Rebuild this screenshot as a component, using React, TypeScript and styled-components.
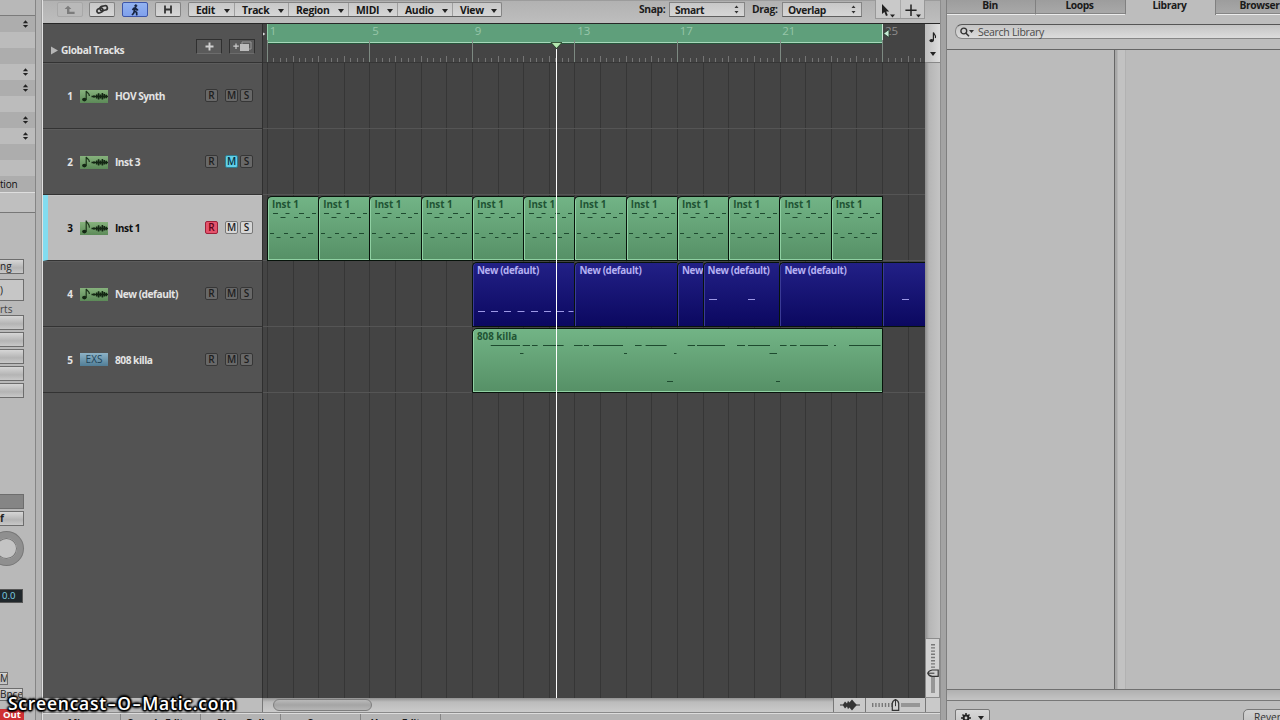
import React from "react";
import styled, { createGlobalStyle, css } from "styled-components";

const GlobalStyle = createGlobalStyle`
  * { box-sizing: border-box; }
  body { margin: 0; background: #bababa; font-family: "Open Sans", "Noto Sans", sans-serif; font-size: 10.5px; color: #1c1c1c; }
  svg { display: block; flex: none; }
`;

const BAR = 25.63;
const START = 3.9;

const Screen = styled.div`
  position: relative;
  display: flex;
  width: 1280px;
  height: 720px;
  overflow: hidden;
  background: #bababa;
  white-space: nowrap;
`;

/* ---------- Inspector ---------- */
const Inspector = styled.aside`
  width: 43px;
  height: 720px;
  flex: none;
  display: flex;
  border-right: 1px solid #e2e2e2;
  background: linear-gradient(90deg, #b4b4b4 0 35px, #858585 35px 36px, #b2b2b2 36px 41px, #9a9a9a 41px);
`;
const InspectorBody = styled.div`
  width: 35px;
  height: 720px;
  overflow: hidden;
  display: flex;
  flex-direction: column;
  align-items: flex-start;
  background: #b9b9b9;
`;
const InspectorTop = styled.div`
  height: 16px;
  width: 35px;
  flex: none;
  background: #b8b8b8;
  border-bottom: 1px solid #7b7b7b;
`;
const ParamRow = styled.div<{ $dark?: boolean }>`
  width: 35px;
  height: 16px;
  flex: none;
  display: flex;
  align-items: center;
  justify-content: flex-end;
  padding-right: 6px;
  background: ${(p) => (p.$dark ? "#adadad" : "#bcbcbc")};
`;
const ParamText = styled.span`
  width: 29px;
  font-size: 10px;
  letter-spacing: -0.2px;
  color: #111;
`;
const InspectorGap = styled.div`
  width: 35px;
  height: 21px;
  flex: none;
  background: #bfbfbf;
  border-top: 1px solid #dedede;
  border-bottom: 1px solid #777;
`;
const SlotButton = styled.div<{ $top: number; $w?: number; $h?: number; $tone?: "field" | "dark" }>`
  width: ${(p) => p.$w ?? 24}px;
  height: ${(p) => p.$h ?? 15}px;
  margin-top: ${(p) => p.$top}px;
  flex: none;
  display: flex;
  align-items: center;
  overflow: hidden;
  font-size: 10px;
  line-height: 13px;
  color: #222;
  border: 1px solid #6d6d6d;
  border-left: 0;
  background: ${(p) =>
    p.$tone === "field" ? "#c6c6c6" : p.$tone === "dark" ? "#858585" : "linear-gradient(#d6d6d6, #b4b4b4 60%, #c8c8c8)"};
`;
const SendsLabel = styled.div`
  height: 14px;
  margin-top: 1px;
  font-size: 10px;
  line-height: 14px;
  color: #444;
  flex: none;
`;
const Knob = styled.div`
  width: 33px;
  height: 33px;
  margin: 6px 0 0 -10px;
  flex: none;
  border-radius: 50%;
  border: 6px solid #8f8f8f;
  background: #c4c4c4;
  box-shadow: inset 0 0 0 1px #777, 0 0 0 1px #777;
`;
const Readout = styled.div`
  width: 23px;
  height: 14px;
  margin-top: 24px;
  flex: none;
  border: 1px solid #555;
  border-left: 0;
  background: #20272b;
  color: #7fd3e6;
  font-size: 9.5px;
  line-height: 12px;
  padding-left: 2px;
`;
const OutBadge = styled.div`
  width: 24px;
  height: 12px;
  margin-top: 8px;
  flex: none;
  background: #cf3034;
  color: #fff;
  font-size: 9.5px;
  font-weight: 700;
  line-height: 12px;
  padding-left: 3px;
`;

/* ---------- Arrange window ---------- */
const Arrange = styled.main`
  width: 897px;
  flex: none;
  display: flex;
  flex-direction: column;
  height: 720px;
`;
const Toolbar = styled.header`
  height: 24px;
  flex: none;
  display: flex;
  align-items: flex-start;
  padding: 2px 0 0 14px;
  background: linear-gradient(#9c9c9c 0 1px, #b2b2b2 1px, #bdbdbd 22px);
  border-bottom: 1px solid #272727;
`;
const raised = css`
  height: 15px;
  border: 1px solid #858585;
  border-bottom-color: #5f5f5f;
  background: linear-gradient(#c8c8c8, #d6d6d6);
`;
const ToolButton = styled.div<{ $active?: boolean; $dim?: boolean; $ml?: number }>`
  ${raised}
  width: 26px;
  margin-left: ${(p) => p.$ml ?? 0}px;
  flex: none;
  display: flex;
  align-items: center;
  justify-content: center;
  font-weight: 700;
  border-radius: 2px;
  ${(p) => p.$active && "background: linear-gradient(#93b3f0, #7fa0ec); border-color: #3d56a8;"}
  ${(p) => p.$dim && "background: #b9b9b9; border-color: #a8a8a8;"}
`;
const MenuBar = styled.nav`
  ${raised}
  display: flex;
  width: 314px;
  margin-left: 7px;
  flex: none;
  border-radius: 2px;
`;
const MenuItem = styled.div<{ $w: number }>`
  width: ${(p) => p.$w}px;
  display: flex;
  align-items: center;
  justify-content: space-between;
  padding: 0 4px 0 7px;
  font-weight: 700;
  font-size: 10.4px;
  line-height: 14px;
  color: #161616;
  letter-spacing: -0.3px;
  & + & { border-left: 1px solid #9f9f9f; }
`;
const Caret = styled.i<{ $s?: number }>`
  width: 0;
  height: 0;
  border: ${(p) => p.$s ?? 3}px solid transparent;
  border-top: ${(p) => (p.$s ?? 3) + 1}px solid #222;
  border-bottom: 0;
  margin-top: 3px;
`;
const FieldLabel = styled.span<{ $w: number; $ml: number }>`
  width: ${(p) => p.$w}px;
  margin-left: ${(p) => p.$ml}px;
  flex: none;
  font-weight: 700;
  font-size: 10.3px;
  letter-spacing: -0.35px;
  line-height: 15px;
`;
const Select = styled.div<{ $w: number }>`
  ${raised}
  width: ${(p) => p.$w}px;
  flex: none;
  display: flex;
  align-items: center;
  justify-content: space-between;
  padding: 0 5px;
  font-weight: 700;
  font-size: 10.3px;
  letter-spacing: -0.4px;
`;
const ToolPair = styled.div`
  display: flex;
  height: 19px;
  width: 50px;
  margin: -2px 0 0 13px;
  flex: none;
  background: #c9c9c9;
  border: 1px solid #989898;
  border-top: 0;
`;
const ToolCell = styled.div`
  flex: 1;
  display: flex;
  align-items: center;
  justify-content: center;
  & + & { border-left: 1px solid #aaa; }
`;
const Body = styled.section`
  display: flex;
  height: 674px;
  flex: none;
`;

/* track headers */
const Headers = styled.div`
  width: 219px;
  flex: none;
  background: #535353;
`;
const GlobalRow = styled.div`
  height: 39px;
  display: flex;
  align-items: center;
  padding: 8px 7px 0 8px;
  border-bottom: 1px solid #333;
`;
const GlobalTitle = styled.span`
  flex: 1;
  padding: 6px 0 0 3px;
  font-weight: 700;
  font-size: 10.2px;
  letter-spacing: -0.4px;
  color: #e4e4e4;
`;
const HeaderButton = styled.div`
  width: 26px;
  height: 15px;
  margin: 0 0 1px 7px;
  border: 1px solid #303030;
  border-bottom-color: #6c6c6c;
  background: #5a5a5a;
  display: flex;
  align-items: center;
  justify-content: center;
`;
const TrackRow = styled.div<{ $selected?: boolean }>`
  height: 66px;
  display: flex;
  align-items: center;
  padding: 0 9px 0 ${(p) => (p.$selected ? 19 : 24)}px;
  border-bottom: 1px solid #333;
  box-shadow: inset 0 1px 0 ${(p) => (p.$selected ? "#c4c4c4" : "#5c5c5c")};
  color: ${(p) => (p.$selected ? "#0e0e0e" : "#e4e4e4")};
  background: ${(p) => (p.$selected ? "#bcbcbc" : "transparent")};
  ${(p) => p.$selected && "border-left: 5px solid #82dcf0;"}
`;
const TrackNumber = styled.span`
  width: 13px;
  flex: none;
  font-weight: 700;
  font-size: 10px;
  text-align: right;
  padding-right: 7px;
`;
const TrackName = styled.span`
  flex: 1;
  padding: 1px 0 0 7px;
  font-weight: 700;
  font-size: 10.2px;
  letter-spacing: -0.5px;
`;
const Toggle = styled.span<{ $tone?: "light" | "red" | "cyan"; $ml?: number }>`
  width: 13px;
  height: 13px;
  margin-left: ${(p) => p.$ml ?? 2}px;
  flex: none;
  border: 1px solid #363636;
  border-radius: 2px;
  font-size: 10px;
  font-weight: 600;
  line-height: 11px;
  text-align: center;
  color: #1d1d1d;
  background: #686868;
  ${(p) => p.$tone === "light" && "background: #d6d6d6; border-color: #777;"}
  ${(p) => p.$tone === "red" && "background: #e4536c; border-color: #9c1f38; color: #5e0016;"}
  ${(p) => p.$tone === "cyan" && "background: #62cfe8; border-color: #2d7d90; color: #07303b;"}
`;
const Splitter = styled.div`
  width: 1px;
  flex: none;
  background: #2f2f2f;
`;

/* timeline */
const Timeline = styled.div`
  position: relative;
  width: 662px;
  flex: none;
  overflow: hidden;
  background: #444;
`;
const GridLayer = styled.div`
  position: absolute;
  inset: 39px 0 0 0;
`;
const Ruler = styled.div`
  position: relative;
  height: 39px;
  border-bottom: 1px solid #363636;
`;
const RulerMarks = styled.div`
  position: absolute;
  inset: 0;
`;
const Cycle = styled.div`
  height: 19px;
  width: 616px;
  margin-left: 4px;
  background: #5f9f7b;
  border-left: 1px solid #93cfab;
  border-right: 1px solid #c9e6d4;
  border-bottom: 1px solid #a6d8ba;
  box-shadow: 0 1px 0 #27553b;
`;
const RulerNumber = styled.span<{ $x: number; $muted?: boolean }>`
  position: absolute;
  top: 0;
  left: ${(p) => p.$x}px;
  font-size: 11.5px;
  line-height: 14px;
  color: ${(p) => (p.$muted ? "#8d8d8d" : "#97c6a9")};
`;
const Lane = styled.div<{ $offset?: number }>`
  position: relative;
  height: 66px;
  display: flex;
  padding: 1px 0 0 ${(p) => p.$offset ?? 0}px;
  background: linear-gradient(#555, #555) 0 65px / 100% 1px no-repeat;
`;
const RegionBox = styled.div<{ $w: number; $blue?: boolean; $last?: boolean; $joined?: boolean }>`
  width: ${(p) => p.$w}px;
  height: 65px;
  flex: none;
  overflow: hidden;
  position: relative;
  border: solid #07130b;
  border-width: 1px ${(p) => (p.$last ? 1 : 0)}px 1px 1px;
  border-top-left-radius: ${(p) => (p.$joined ? 0 : 5)}px;
  background: ${(p) =>
    p.$blue ? "linear-gradient(#222086, #0b0860)" : "linear-gradient(#72b486, #569066)"};
  box-shadow: inset 1px ${(p) => (p.$blue ? "0 0 #3a3a96" : "-1px 0 #8fd0a2")};
`;
const RegionLabel = styled.div<{ $blue?: boolean }>`
  padding: 1px 0 0 4px;
  font-weight: 700;
  font-size: 9.8px;
  letter-spacing: ${(p) => (p.$blue ? -0.37 : 0)}px;
  line-height: 14px;
  height: 0;
  color: ${(p) => (p.$blue ? "#b5b0f2" : "#1f5434")};
`;
const NoteLayer = styled.svg`
  margin-top: -2px;
`;
const Playhead = styled.div`
  position: absolute;
  left: 287px;
  top: 18px;
  bottom: 0;
  width: 12px;
  display: flex;
  flex-direction: column;
  align-items: center;
`;
const PlayLine = styled.div`
  width: 1px;
  flex: 1;
  margin-left: 1px;
  background: #fff;
`;

/* strip right of the timeline */
const Strip = styled.div`
  width: 15px;
  flex: none;
  display: flex;
  flex-direction: column;
  background: linear-gradient(90deg, #8b8b8b, #b6b6b6 4px, #c4c4c4);
`;
const NoteBox = styled.div`
  height: 39px;
  display: flex;
  flex-direction: column;
  align-items: center;
  padding-top: 7px;
  gap: 9px;
  background: linear-gradient(90deg, #bdbdbd, #dedede);
  border-bottom: 1px solid #888;
`;
const StripSpace = styled.div`
  flex: 1;
`;
const VZoom = styled.div`
  height: 60px;
  padding-left: 1px;
  background: #d2d2d2;
  border: 1px solid #8c8c8c;
`;

/* bottom area */
const ScrollRow = styled.div`
  height: 15px;
  flex: none;
  display: flex;
  border-bottom: 1px solid #8a8a8a;
  background: #bdbdbd;
`;
const ScrollLeft = styled.div`
  width: 220px;
  flex: none;
  border-right: 1px solid #777;
`;
const ScrollTrack = styled.div`
  width: 570px;
  flex: none;
  padding: 1px 0 0 10px;
  background: linear-gradient(#929292, #bcbcbc 4px, #cbcbcb);
`;
const Thumb = styled.div`
  width: 99px;
  height: 12px;
  border: 1px solid #7e7e7e;
  border-radius: 6px;
  background: linear-gradient(#b9b9b9, #a4a4a4 50%, #b6b6b6);
`;
const ScrollCell = styled.div<{ $w: number }>`
  width: ${(p) => p.$w}px;
  flex: none;
  display: flex;
  align-items: center;
  justify-content: center;
  background: #c9c9c9;
  border-left: 1px solid #777;
`;
const EditorTabs = styled.div`
  height: 7px;
  flex: none;
  overflow: hidden;
  display: flex;
  background: #b4b4b4;
  border-top: 1px solid #dcdcdc;
`;
const EditorTab = styled.div<{ $w: number }>`
  width: ${(p) => p.$w}px;
  flex: none;
  text-align: center;
  font-weight: 700;
  font-size: 10.3px;
  letter-spacing: -0.4px;
  line-height: 14px;
  padding-top: 2px;
  height: 20px;
  border-right: 1px solid #858585;
  color: #161616;
`;

/* ---------- Media panel ---------- */
const Gutter = styled.div`
  width: 7px;
  flex: none;
  background: linear-gradient(90deg, #8d8d8d 0 1px, #a3a3a3 1px 6px, #7f7f7f 6px);
`;
const Media = styled.aside`
  width: 333px;
  flex: none;
  height: 720px;
  display: flex;
  flex-direction: column;
  background: #bdbdbd;
`;
const MediaTabs = styled.div`
  height: 15px;
  flex: none;
  display: flex;
  overflow: hidden;
`;
const MediaTab = styled.div<{ $w: number; $active?: boolean }>`
  width: ${(p) => p.$w}px;
  flex: none;
  height: 15px;
  padding-right: 2px;
  text-align: center;
  font-weight: 700;
  font-size: 10.3px;
  letter-spacing: -0.4px;
  line-height: 10px;
  color: #1a1a1a;
  background: ${(p) => (p.$active ? "#bdbdbd" : "linear-gradient(#9d9d9d, #a9a9a9)")};
  border-right: 1px solid #808080;
  border-bottom: ${(p) => (p.$active ? "0" : "1px solid #ececec")};
  box-shadow: ${(p) => (p.$active ? "none" : "inset 0 -1px 0 #858585")};
`;
const SearchBox = styled.div`
  height: 15px;
  width: 345px;
  margin: 9px 0 0 8px;
  flex: none;
  display: flex;
  align-items: center;
  gap: 4px;
  padding-left: 4px;
  border: 1px solid #868686;
  border-top-color: #555;
  border-radius: 7px;
  background: linear-gradient(#c4c4c4, #dcdcdc);
  color: #4a4a4a;
  font-size: 10.5px;
  letter-spacing: -0.3px;
`;
const Columns = styled.div`
  height: 641px;
  margin-top: 10px;
  flex: none;
  display: flex;
  border-top: 1px solid #666;
  border-bottom: 1px solid #707070;
`;
const Column = styled.div<{ $w: number }>`
  width: ${(p) => p.$w}px;
  flex: none;
  background: #bbb;
`;
const ColumnBar = styled.div`
  width: 12px;
  flex: none;
  background: linear-gradient(90deg, #666 0 1px, #a8a8a8 1px 3px, #c2c2c2 4px 11px, #b2b2b2 11px);
`;
const FooterStrip = styled.div`
  height: 11px;
  flex: none;
  background: linear-gradient(#b0b0b0, #c4c4c4);
  border-bottom: 1px solid #777;
`;
const Footer = styled.div`
  flex: 1;
  display: flex;
  justify-content: space-between;
  padding: 8px 0 0 8px;
  overflow: hidden;
`;
const GearButton = styled.div`
  width: 35px;
  height: 17px;
  display: flex;
  align-items: center;
  justify-content: center;
  gap: 7px;
  border: 1px solid #777;
  border-radius: 2px;
  background: linear-gradient(#d8d8d8, #c4c4c4);
`;
const RevertButton = styled.div`
  width: 60px;
  height: 17px;
  margin-right: -23px;
  padding-left: 10px;
  border: 1px solid #777;
  border-radius: 5px;
  background: linear-gradient(#d2d2d2, #c0c0c0);
  font-size: 10.2px;
  color: #333;
  line-height: 14px;
`;

const Watermark = styled.div`
  position: absolute;
  left: 8px;
  top: 691px;
  font-size: 17.5px;
  line-height: 24px;
  font-weight: 600;
  letter-spacing: 0.75px;
  color: #fff;
  text-shadow: -1px -1px 1px #000, 1px -1px 1px #000, -1px 1px 1px #000, 1px 1px 1px #000, 0 2px 2px #000, 2px 0 2px #000, -2px 0 2px #000, 0 -2px 2px #000;
`;
const Dash = styled.span`
  display: inline-block;
  margin: 0 2px;
  transform: scaleX(1.5);
`;

/* ---------- Glyphs ---------- */
const UpDown = () => (
  <svg width="7" height="10" viewBox="0 0 8 10" fill="#222">
    <path d="M1 4L4 0.6L7 4ZM1 6L4 9.4L7 6Z" />
  </svg>
);
const SmallUpDown = () => (
  <svg width="5" height="9" viewBox="0 0 5 9" fill="#333">
    <path d="M0.5 3L2.5 0.4L4.5 3ZM0.5 6L2.5 8.6L4.5 6Z" />
  </svg>
);
const InstrumentIcon = ({ tall }: { tall?: boolean }) => (
  <svg width="28" height="20" viewBox="0 0 28 20">
    <defs>
      <linearGradient id="inst" x1="0" y1="0" x2="0" y2="1">
        <stop offset="0" stopColor="#86b27c" />
        <stop offset="1" stopColor="#5c8a58" />
      </linearGradient>
    </defs>
    <rect y="4" width="28" height="13" fill="url(#inst)" />
    <ellipse cx="4.4" cy="13.6" rx="2.3" ry="1.8" fill="#132613" />
    <path d={tall ? "M6.2 13.6V2.6C7 5.6 9.8 6 9.4 9.6" : "M6.2 13.6V5C7 7 9.4 7 9.4 10"} fill="none" stroke="#1c331a" strokeWidth="1.2" />
    <path d="M11.5 10.5H28M14 9.2v2.6" stroke="#132613" strokeWidth="1.3" fill="none" />
    <path d="M16.7 8.4v4.2M18.6 7.2v6.4M20.5 8.6v4M22.4 7v6.6M24.3 8v4.6M26.2 8.8v3.4" stroke="#132613" strokeWidth="1.6" fill="none" />
  </svg>
);
const ExsBox = styled.span`
  width: 28px;
  height: 13px;
  flex: none;
  background: linear-gradient(#8db2c6, #517e97);
  color: #1d4256;
  font-size: 10px;
  line-height: 13px;
  text-align: center;
`;
const Runner = () => (
  <svg width="12" height="12" viewBox="0 0 12 12" fill="none" stroke="#16233f" strokeWidth="1.7">
    <circle cx="6.8" cy="1.8" r="1.1" fill="#16233f" strokeWidth="0.8" />
    <path d="M6.2 3.6L5.4 7L7.6 8.4L7.8 11.4M5.4 7L4.6 9.2L3 11M3.6 6.2L4.6 4.4L6.4 3.8L7.8 5.8L9.2 5.6" />
  </svg>
);
const LinkGlyph = () => (
  <svg width="14" height="11" viewBox="0 0 14 11" fill="none" stroke="#333" strokeWidth="1.7">
    <rect x="1.8" y="4.4" width="6.2" height="4.2" rx="2.1" transform="rotate(-25 4.9 6.5)" />
    <rect x="5" y="2" width="7.4" height="4.4" rx="2.2" transform="rotate(-12 8.7 4.2)" />
  </svg>
);
const WaveGlyph = () => (
  <svg width="20" height="12" viewBox="0 0 20 12" fill="#333">
    <path d="M0 5.5H3L5 2.6L7 4.6L8 1.8L9.4 3.6L12 0.4L15 4L16.6 5.5H20V6.5H16.6L15 8L12 11.6L9.4 8.4L8 10.2L7 7.4L5 9.4L3 6.5H0Z" />
  </svg>
);
const HZoomGlyph = () => (
  <svg width="52" height="14" viewBox="0 0 52 14">
    <path d="M2 7h21" stroke="#777" strokeWidth="4" strokeDasharray="1.4 1.8" />
    <path d="M31 7h19" stroke="#969696" strokeWidth="4" />
    <path d="M22.3 12.4V5.4Q22.6 2.6 25.5 1.6Q28.4 2.6 28.7 5.4V12.4Z" fill="#cfcfcf" stroke="#333" strokeWidth="1.2" />
    <path d="M25.5 1.6v6.6" stroke="#333" />
  </svg>
);
const VZoomGlyph = () => (
  <svg width="12" height="58" viewBox="0 0 12 58">
    <path d="M6 5v25" stroke="#777" strokeWidth="4" strokeDasharray="1.4 1.8" />
    <path d="M6 38v16" stroke="#969696" strokeWidth="4" />
    <path d="M11.2 31H5.2Q1.6 31.6 0.8 34.2Q1.6 36.8 5.2 37.4H11.2Z" fill="#cfcfcf" stroke="#333" strokeWidth="1.2" />
    <path d="M0.8 34.2h6.6" stroke="#333" />
  </svg>
);

/* ---------- Data ---------- */
type Note = [number, number, number];
const INST_NOTES: Note[] = [
  [5, 17, 5], [17.5, 17, 4], [31, 17, 5], [44, 17, 4],
  [12.5, 21, 5], [26, 21, 4], [38, 21, 4],
  [2, 37, 4], [16, 37, 4], [28.5, 37, 4], [40, 37, 5],
  [8.5, 41, 4], [22, 41, 3.5], [34, 41, 4],
];
const KILLA_TOP: [number, number][] = [
  [490.7, 520], [522.7, 530], [532, 537.6], [543, 563.6], [574, 582.6], [584, 589], [593, 623],
  [635, 641.6], [645.6, 666.6], [687.6, 695], [697, 725], [737, 745], [748, 770], [780, 786.6],
  [790, 796.6], [800, 828], [834, 836], [849, 880.5],
];
const KILLA_NOTES: Note[] = [
  ...KILLA_TOP.map(([a, b]): Note => [a - 473, 17, b - a]),
  [47, 25, 3.5], [151, 25, 3], [201, 25, 2.5], [296.5, 25, 7.5], [194, 53, 6], [303, 53, 4],
];
const BASS_NOTES: Note[] = [5, 18, 31, 44.5, 58, 71, 84].map((x): Note => [x, 49, 7]).concat([[95.5, 49, 5]]);

const menus: [string, number][] = [
  ["Edit", 45], ["Track", 54], ["Region", 60], ["MIDI", 49], ["Audio", 55], ["View", 49],
];

const tracks = [
  { name: "HOV Synth" },
  { name: "Inst 3", muted: true },
  { name: "Inst 1", selected: true },
  { name: "New (default)" },
  { name: "808 killa", exs: true },
];

interface RegionProps {
  label?: string;
  bars: number;
  blue?: boolean;
  last?: boolean;
  joined?: boolean;
  notes?: Note[];
}
const Region = ({ label, bars, blue, last, joined, notes = [] }: RegionProps) => (
  <RegionBox $w={bars * BAR + (last ? 1 : 0)} $blue={blue} $last={last} $joined={joined}>
    <RegionLabel $blue={blue}>{label}</RegionLabel>
    <NoteLayer width={bars * BAR} height="65">
      {notes.map(([x, y, w], i) => (
        <rect key={i} x={x} y={y} width={w} height="1" fill={blue ? "#9d98e6" : "#1e4a2f"} />
      ))}
    </NoteLayer>
  </RegionBox>
);

const GridLines = () => (
  <svg width="663" height="635">
    {Array.from({ length: 26 }, (_, i) => (
      <rect key={i} x={Math.round(START + i * BAR)} y="0" width="1" height="635" fill="#363636" />
    ))}
  </svg>
);

const RulerTicks = () => (
  <svg width="663" height="38">
    {Array.from({ length: 104 }, (_, i) => {
      const bar = i % 4 === 0;
      const major = i % 16 === 0;
      const top = major ? 16 : bar ? 32 : 34;
      return (
        <rect key={i} x={Math.round(START + (i * BAR) / 4)} y={top} width="1" height={38 - top} fill={major ? "#7d8a82" : "#747474"} />
      );
    })}
  </svg>
);

export default function App() {
  return (
    <>
      <GlobalStyle />
      <Screen>
        <Inspector>
          <InspectorBody>
            <InspectorTop />
            {["s", "", "", "s", "s", "", "s", "s", "", "", "tion"].map((v, i) => (
              <ParamRow key={i} $dark={i % 2 === 0}>
                {v === "s" ? <UpDown /> : v ? <ParamText>{v}</ParamText> : null}
              </ParamRow>
            ))}
            <InspectorGap />
            <SlotButton $top={46}>ng</SlotButton>
            <SlotButton $top={5} $h={22} $tone="field">)</SlotButton>
            <SendsLabel>rts</SendsLabel>
            <SlotButton $top={-1} />
            <SlotButton $top={2} />
            <SlotButton $top={2} />
            <SlotButton $top={2} />
            <SlotButton $top={2} />
            <SlotButton $top={96} $tone="dark" />
            <SlotButton $top={2}><b>f</b></SlotButton>
            <Knob />
            <Readout>0.0</Readout>
            <SlotButton $top={69} $w={8} $h={13}>M</SlotButton>
            <SlotButton $top={3} $w={23} $h={13}>Bnce</SlotButton>
            <OutBadge>Out</OutBadge>
          </InspectorBody>
        </Inspector>

        <Arrange>
          <Toolbar>
            <ToolButton $dim>
              <svg width="12" height="10" viewBox="0 0 12 10"><path d="M0.6 4L4 0.8L7.4 4H5.4V6.8H10.6V9H3V4Z" fill="#7c7c7c" /></svg>
            </ToolButton>
            <ToolButton $ml={6}><LinkGlyph /></ToolButton>
            <ToolButton $ml={7} $active><Runner /></ToolButton>
            <ToolButton $ml={7}>
              <svg width="10" height="9" viewBox="0 0 10 9" fill="none" stroke="#333" strokeWidth="1.8"><path d="M2 0.5V8.5M8 0.5V8.5M2 4.5H8" /></svg>
            </ToolButton>
            <MenuBar>
              {menus.map(([t, w]) => (
                <MenuItem key={t} $w={w}>{t}<Caret /></MenuItem>
              ))}
            </MenuBar>
            <FieldLabel $w={30} $ml={137}>Snap:</FieldLabel>
            <Select $w={76}>Smart<SmallUpDown /></Select>
            <FieldLabel $w={30} $ml={7}>Drag:</FieldLabel>
            <Select $w={80}>Overlap<SmallUpDown /></Select>
            <ToolPair>
              <ToolCell>
                <svg width="17" height="17" viewBox="0 0 17 17" fill="#222"><path d="M3 3V13L5.4 11L7 15L8.8 14.2L7.2 10.4H10.2ZM11 13.6H16L13.5 16.6Z" /></svg>
              </ToolCell>
              <ToolCell>
                <svg width="19" height="17" viewBox="0 0 19 17"><path d="M8 3.5V15M2.4 9.2H13.6" stroke="#222" strokeWidth="1.5" /><path d="M13 13.6H18L15.5 16.6Z" fill="#222" /></svg>
              </ToolCell>
            </ToolPair>
          </Toolbar>

          <Body>
            <Headers>
              <GlobalRow>
                <svg width="7" height="9" viewBox="0 0 7 9" style={{ marginTop: 6 }}><path d="M0 0.5L7 4.5L0 8.5Z" fill="#b5b5b5" /></svg>
                <GlobalTitle>Global Tracks</GlobalTitle>
                <HeaderButton>
                  <svg width="9" height="9" viewBox="0 0 9 9"><path d="M4.5 0.5V8.5M0.5 4.5H8.5" stroke="#d0d0d0" strokeWidth="1.9" /></svg>
                </HeaderButton>
                <HeaderButton>
                  <svg width="19" height="11" viewBox="0 0 19 11"><path d="M3 2.5V8M0.3 5.2H5.8" stroke="#ccc" strokeWidth="1.2" /><path d="M9 3V1H18V8H16" fill="none" stroke="#999" /><rect x="7" y="3" width="9" height="7" fill="#bbb" /></svg>
                </HeaderButton>
              </GlobalRow>
              {tracks.map((t, i) => (
                <TrackRow key={t.name} $selected={t.selected}>
                  <TrackNumber>{i + 1}</TrackNumber>
                  {t.exs ? <ExsBox>EXS</ExsBox> : <InstrumentIcon tall={t.selected} />}
                  <TrackName>{t.name}</TrackName>
                  <Toggle $tone={t.selected ? "red" : undefined}>R</Toggle>
                  <Toggle $ml={7} $tone={t.muted ? "cyan" : t.selected ? "light" : undefined}>M</Toggle>
                  <Toggle $tone={t.selected ? "light" : undefined}>S</Toggle>
                </TrackRow>
              ))}
            </Headers>
            <Splitter />
            <Timeline>
              <GridLayer><GridLines /></GridLayer>
              <Ruler>
                <Cycle />
                <RulerMarks><RulerTicks /></RulerMarks>
                {[1, 5, 9, 13, 17, 21].map((n) => (
                  <RulerNumber key={n} $x={START + (n - 1) * BAR + 2.8}>{n}</RulerNumber>
                ))}
                <RulerNumber $x={622} $muted>25</RulerNumber>
                <RulerMarks>
                  <svg width="663" height="38">
                    <path d="M0 8.5L2.4 10L0 11.5Z" fill="#ddd" />
                    <path d="M626 5.5V13.5L620.5 9.5Z" fill="#c8ecd6" stroke="#1f3a2a" strokeWidth="0.8" />
                  </svg>
                </RulerMarks>
              </Ruler>
              <Lane />
              <Lane />
              <Lane $offset={START}>
                {Array.from({ length: 12 }, (_, i) => (
                  <Region key={i} label="Inst 1" bars={2} last={i === 11} notes={INST_NOTES} />
                ))}
              </Lane>
              <Lane $offset={START + 8 * BAR}>
                <Region blue label="New (default)" bars={4} notes={BASS_NOTES} />
                <Region blue label="New (default)" bars={4} />
                <Region blue label="New" bars={1} />
                <Region blue label="New (default)" bars={3} notes={[[5, 37, 8], [44, 37, 7]]} />
                <Region blue label="New (default)" bars={4} />
                <Region blue joined bars={3} notes={[[19, 37, 7]]} />
              </Lane>
              <Lane $offset={START + 8 * BAR}>
                <Region label="808 killa" bars={16} last notes={KILLA_NOTES} />
              </Lane>
              <Playhead>
                <svg width="12" height="7" viewBox="0 0 12 7"><path d="M1 0.5H12L6.5 6.5Z" fill="#b5e8b0" stroke="#1c3a20" strokeWidth="0.8" /></svg>
                <PlayLine />
              </Playhead>
            </Timeline>
            <Strip>
              <NoteBox>
                <svg width="8" height="12" viewBox="0 0 8 12"><ellipse cx="2.6" cy="9.6" rx="2.2" ry="1.6" fill="#222" /><path d="M4.4 9.6V1.4C4.8 3.6 7.4 4 6.4 7" fill="none" stroke="#222" strokeWidth="1.2" /></svg>
                <Caret $s={3} style={{ marginTop: 0 }} />
              </NoteBox>
              <StripSpace />
              <VZoom><VZoomGlyph /></VZoom>
            </Strip>
          </Body>

          <ScrollRow>
            <ScrollLeft />
            <ScrollTrack><Thumb /></ScrollTrack>
            <ScrollCell $w={32}><WaveGlyph /></ScrollCell>
            <ScrollCell $w={60}><HZoomGlyph /></ScrollCell>
            <ScrollCell $w={15} />
          </ScrollRow>
          <EditorTabs>
            <EditorTab $w={78}>Mixer</EditorTab>
            <EditorTab $w={80}>Sample Editor</EditorTab>
            <EditorTab $w={80}>Piano Roll</EditorTab>
            <EditorTab $w={80}>Score</EditorTab>
            <EditorTab $w={80}>Hyper Editor</EditorTab>
          </EditorTabs>
        </Arrange>

        <Gutter />

        <Media>
          <MediaTabs>
            <MediaTab $w={89}>Bin</MediaTab>
            <MediaTab $w={90}>Loops</MediaTab>
            <MediaTab $w={90} $active>Library</MediaTab>
            <MediaTab $w={90}>Browser</MediaTab>
          </MediaTabs>
          <SearchBox>
            <svg width="14" height="10" viewBox="0 0 14 10"><circle cx="3.8" cy="4" r="2.9" fill="none" stroke="#333" strokeWidth="1.4" /><path d="M6 6.2L9 9.2" stroke="#333" strokeWidth="1.6" /><path d="M9 3H14L11.5 6Z" fill="#333" /></svg>
            Search Library
          </SearchBox>
          <Columns>
            <Column $w={167} />
            <ColumnBar />
            <Column $w={154} />
          </Columns>
          <FooterStrip />
          <Footer>
            <GearButton>
              <svg width="10" height="10" viewBox="0 0 10 10"><circle cx="5" cy="5" r="2.4" fill="none" stroke="#222" strokeWidth="2" /><path d="M5 0V2M5 8V10M0 5H2M8 5H10M1.5 1.5L3 3M7 7L8.5 8.5M8.5 1.5L7 3M3 7L1.5 8.5" stroke="#222" strokeWidth="1.5" /></svg>
              <Caret style={{ marginTop: 1 }} />
            </GearButton>
            <RevertButton>Revert</RevertButton>
          </Footer>
        </Media>

        <Watermark>Screencast<Dash>-</Dash>O<Dash>-</Dash>Matic.com</Watermark>
      </Screen>
    </>
  );
}
